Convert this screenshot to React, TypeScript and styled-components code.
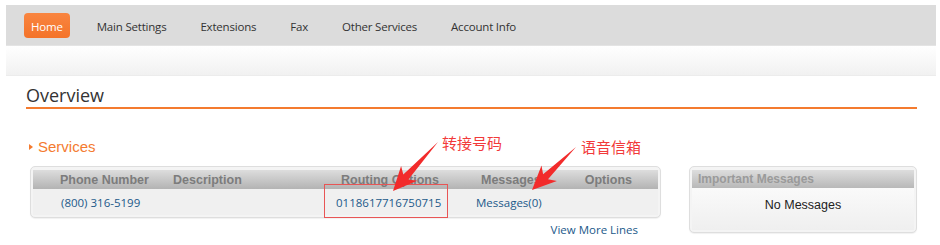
import React from "react";
import styled, { createGlobalStyle } from "styled-components";

const Global = createGlobalStyle`
  html, body { margin: 0; padding: 0; background: #fff; }
  body { font-family: "Open Sans", "Liberation Sans", sans-serif; }
`;

const Page = styled.div`
  position: relative;
  width: 940px;
  height: 245px;
  padding: 5px 4px 0 6px;
  box-sizing: border-box;
  overflow: hidden;
`;

const NavBar = styled.nav`
  height: 40px;
  background: #dcdcdc;
  display: flex;
  align-items: center;
  padding-left: 18px;
  border-bottom: 1px solid #e4e4e4;
`;

const NavItem = styled.a<{ $active?: boolean }>`
  font-family: "Open Sans", sans-serif;
  font-size: 11.5px;
  letter-spacing: -0.2px;
  text-decoration: none;
  color: ${(p) => (p.$active ? "#fff" : "#333")};
  background: ${(p) => (p.$active ? "linear-gradient(#f98540, #f47329)" : "transparent")};
  border-radius: 4px;
  height: 25px;
  line-height: 27px;
  padding: ${(p) => (p.$active ? "0 7px" : "0 17px")};
  margin-right: ${(p) => (p.$active ? "10px" : "0")};
`;

const SubStrip = styled.div`
  height: 29px;
  background: linear-gradient(#ffffff, #f1f1f1);
  border-bottom: 1px solid #ececec;
`;

const Content = styled.div`
  padding: 0 19px 0 20px;
`;

const Title = styled.h1`
  margin: 8px 0 0;
  font-family: "Open Sans", sans-serif;
  font-weight: normal;
  font-size: 18px;
  line-height: 22px;
  color: #333;
  padding-bottom: 1px;
  border-bottom: 2px solid #f47b2f;
`;

const SectionHead = styled.div`
  margin: 29px 0 0 3px;
  display: flex;
  align-items: center;
  gap: 5px;
  font-family: "Liberation Sans", Arial, sans-serif;
  font-size: 15px;
  line-height: 18px;
  color: #f47b2f;
`;

const Triangle = styled.span`
  width: 0;
  height: 0;
  border-top: 3px solid transparent;
  border-bottom: 3px solid transparent;
  border-left: 4px solid #f47b2f;
`;

const Row = styled.div`
  display: flex;
  align-items: flex-start;
  margin-top: 10px;
`;

const LeftCol = styled.div`
  margin-left: 4px;
  width: 631px;
  display: flex;
  flex-direction: column;
`;

const Panel = styled.div<{ $w: number }>`
  width: ${(p) => p.$w}px;
  box-sizing: border-box;
  border: 1px solid #dedede;
  border-radius: 5px;
  padding: 3px 2px 2px 2px;
  background: #f4f4f4;
  box-shadow: 0 1px 1px rgba(0, 0, 0, 0.06);
`;

const Grid = styled.div<{ $head?: boolean }>`
  display: grid;
  grid-template-columns: 113px 163px 140px 1fr;
  padding-left: 27px;
  align-items: center;
  height: ${(p) => (p.$head ? "19px" : "26px")};
  background: ${(p) => (p.$head ? "linear-gradient(#dddddd, #b3b3b3)" : "#f0f0f0")};
`;

const HeadCell = styled.div<{ $shift?: number }>`
  font-family: "Liberation Sans", Arial, sans-serif;
  font-weight: bold;
  font-size: 12.5px;
  color: #7c7c7c;
  padding-left: ${(p) => p.$shift ?? 0}px;
  white-space: nowrap;
`;

const HeadPair = styled(HeadCell)`
  display: flex;
  gap: 44px;
`;

const DataCell = styled.div<{ $shift?: number }>`
  font-family: "Open Sans", sans-serif;
  font-size: 11.5px;
  color: #22598a;
  padding-left: ${(p) => p.$shift ?? 0}px;
  white-space: nowrap;
`;

const MoreLink = styled.a`
  align-self: flex-end;
  margin: 4px 23px 0 0;
  font-family: "Open Sans", sans-serif;
  font-size: 11.5px;
  color: #22598a;
  text-decoration: none;
`;

const SidePanelWrap = styled.div`
  margin-left: 28px;
`;

const SideHead = styled.div`
  height: 18px;
  line-height: 18px;
  padding-left: 6px;
  background: linear-gradient(#dddddd, #b8b8b8);
  font-family: "Liberation Sans", Arial, sans-serif;
  font-weight: bold;
  font-size: 12px;
  color: #9a9a9a;
`;

const SideBody = styled.div`
  height: 42px;
  display: flex;
  justify-content: center;
  padding-top: 10px;
  box-sizing: border-box;
  background: linear-gradient(#fafafa, #efefef);
  font-family: "Liberation Sans", Arial, sans-serif;
  font-size: 12.5px;
  color: #222;
`;

const Overlay = styled.div`
  position: absolute;
  inset: 0;
  pointer-events: none;
`;

const RedBox = styled.div`
  position: absolute;
  left: 324px;
  top: 184px;
  width: 124px;
  height: 34px;
  border: 1.5px solid #e85555;
  box-sizing: border-box;
`;

const Note = styled.div<{ $x: number; $y: number }>`
  position: absolute;
  left: ${(p) => p.$x}px;
  top: ${(p) => p.$y}px;
  font-family: "Noto Sans CJK SC", sans-serif;
  font-size: 15px;
  line-height: 18px;
  color: #f23a3a;
`;

const ArrowSvg = styled.svg`
  position: absolute;
  left: 0;
  top: 0;
`;

function arrow(tx: number, ty: number, tipX: number, tipY: number) {
  const dx = tipX - tx;
  const dy = tipY - ty;
  const len = Math.hypot(dx, dy);
  const ux = dx / len;
  const uy = dy / len;
  const px = -uy;
  const py = ux;
  const headLen = 24;
  const headW = 11;
  const shaftW = 3.5;
  const bx = tipX - ux * headLen;
  const by = tipY - uy * headLen;
  const nx = tipX - ux * (headLen - 5);
  const ny = tipY - uy * (headLen - 5);
  const pts = [
    [tx, ty],
    [nx + px * shaftW, ny + py * shaftW],
    [bx + px * headW, by + py * headW],
    [tipX, tipY],
    [bx - px * headW, by - py * headW],
    [nx - px * shaftW, ny - py * shaftW],
  ];
  return pts.map((p) => p.map((v) => v.toFixed(1)).join(",")).join(" ");
}

export default function App() {
  return (
    <>
      <Global />
      <Page>
        <NavBar>
          <NavItem $active>Home</NavItem>
          <NavItem>Main Settings</NavItem>
          <NavItem>Extensions</NavItem>
          <NavItem>Fax</NavItem>
          <NavItem>Other Services</NavItem>
          <NavItem>Account Info</NavItem>
        </NavBar>
        <SubStrip />
        <Content>
          <Title>Overview</Title>
          <SectionHead>
            <Triangle />
            Services
          </SectionHead>
          <Row>
            <LeftCol>
              <Panel $w={631}>
                <Grid $head>
                  <HeadCell>Phone Number</HeadCell>
                  <HeadCell>Description</HeadCell>
                  <HeadCell $shift={5}>Routing Options</HeadCell>
                  <HeadPair $shift={5}>
                    <span>Messages</span>
                    <span>Options</span>
                  </HeadPair>
                </Grid>
                <Grid>
                  <DataCell $shift={1}>(800) 316-5199</DataCell>
                  <DataCell />
                  <DataCell>0118617716750715</DataCell>
                  <DataCell>Messages(0)</DataCell>
                </Grid>
              </Panel>
              <MoreLink>View More Lines</MoreLink>
            </LeftCol>
            <SidePanelWrap>
              <Panel $w={228}>
                <SideHead>Important Messages</SideHead>
                <SideBody>No Messages</SideBody>
              </Panel>
            </SidePanelWrap>
          </Row>
        </Content>
        <Overlay>
          <RedBox />
          <ArrowSvg width="940" height="245">
            <polygon points={arrow(438, 142, 393, 191)} fill="#f22b2b" />
            <polygon points={arrow(576, 147, 532, 190)} fill="#f22b2b" />
          </ArrowSvg>
          <Note $x={442} $y={134}>转接号码</Note>
          <Note $x={581} $y={138}>语音信箱</Note>
        </Overlay>
      </Page>
    </>
  );
}
